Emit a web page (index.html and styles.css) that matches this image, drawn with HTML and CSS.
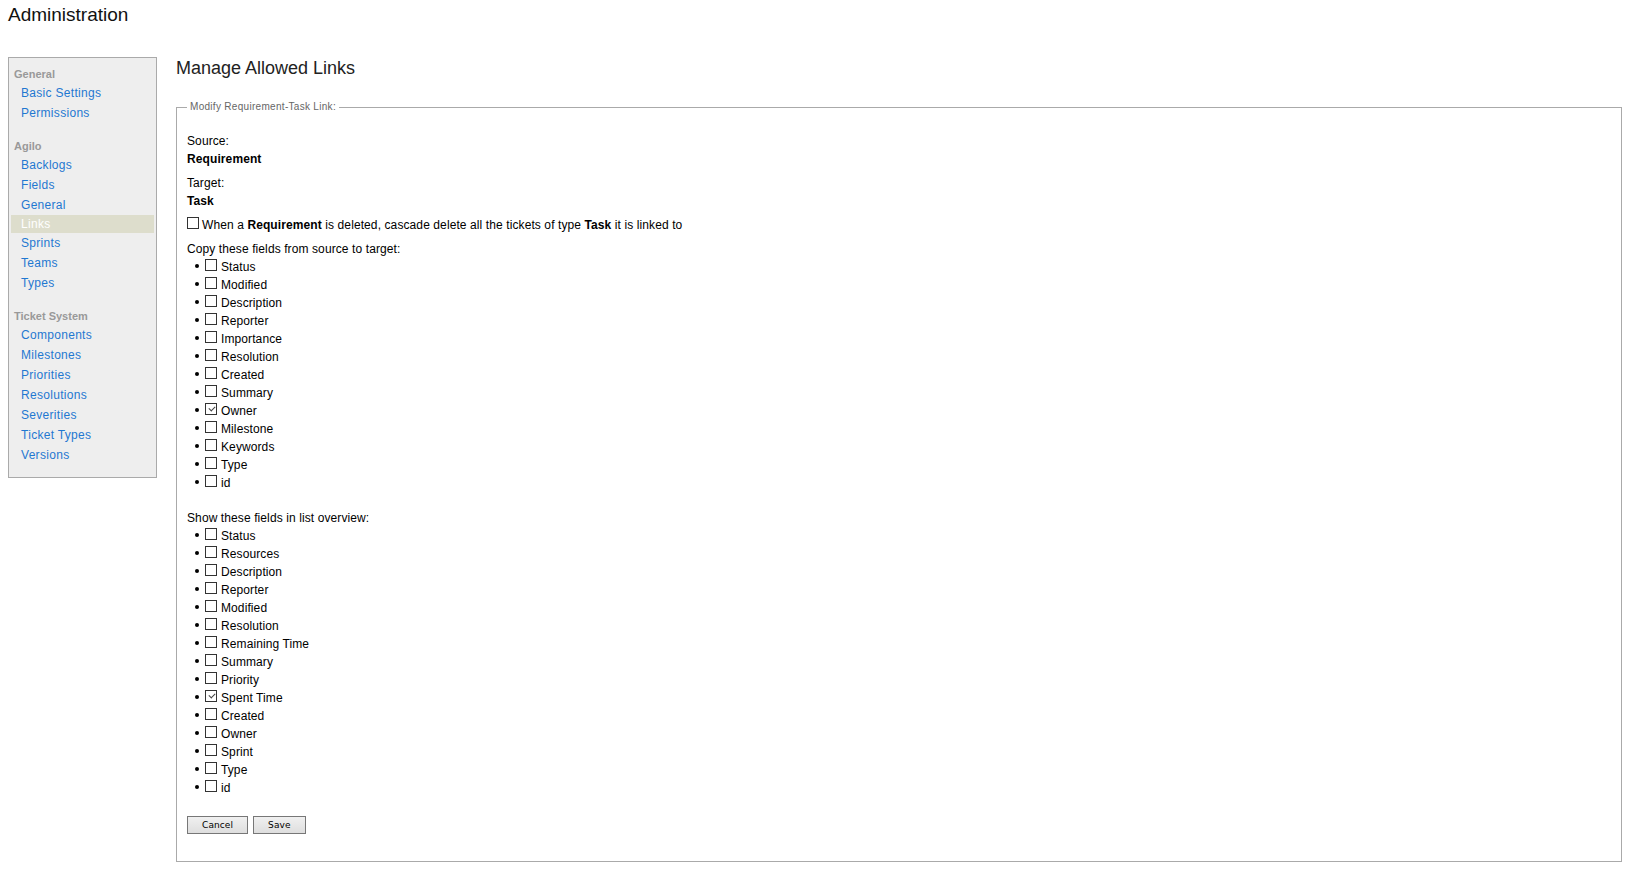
FILE: index.html
```html
<!DOCTYPE html>
<html lang="en">

<head>
    <meta charset="UTF-8">
    <title>Administration</title>
    <link rel="stylesheet" href="styles.css">
</head>

<body>
    <h1 class="page-title">Administration</h1>

    <div class="admin">
        <!-- Admin panel navigation -->
        <div class="tabs">
            <div class="group">
                <div class="group-title">General</div>
                <ul>
                    <li><a href="#">Basic Settings</a></li>
                    <li><a href="#">Permissions</a></li>
                </ul>
            </div>
            <div class="group">
                <div class="group-title">Agilo</div>
                <ul>
                    <li><a href="#">Backlogs</a></li>
                    <li><a href="#">Fields</a></li>
                    <li><a href="#">General</a></li>
                    <li class="active"><a href="#">Links</a></li>
                    <li><a href="#">Sprints</a></li>
                    <li><a href="#">Teams</a></li>
                    <li><a href="#">Types</a></li>
                </ul>
            </div>
            <div class="group">
                <div class="group-title">Ticket System</div>
                <ul>
                    <li><a href="#">Components</a></li>
                    <li><a href="#">Milestones</a></li>
                    <li><a href="#">Priorities</a></li>
                    <li><a href="#">Resolutions</a></li>
                    <li><a href="#">Severities</a></li>
                    <li><a href="#">Ticket Types</a></li>
                    <li><a href="#">Versions</a></li>
                </ul>
            </div>
        </div>

        <div class="tabcontent">
            <h2>Manage Allowed Links</h2>

            <form action="" name="modifylink">
                <fieldset>
                    <legend>Modify Requirement-Task Link:</legend>

                    <div class="field">
                        <div class="field-label">Source:</div>
                        <div class="field-value">Requirement</div>
                    </div>
                    <div class="field field-last">
                        <div class="field-label">Target:</div>
                        <div class="field-value">Task</div>
                    </div>

                    <div class="cascade">
                        <input type="checkbox" name="cascade_delete">When a <b>Requirement</b> is deleted, cascade delete all the tickets of type <b>Task</b> it is linked to
                    </div>

                    <p class="list-title">Copy these fields from source to target:</p>
                    <ul class="checklist">
                        <li><input type="checkbox" name="copy_status">Status</li>
                        <li><input type="checkbox" name="copy_changetime">Modified</li>
                        <li><input type="checkbox" name="copy_description">Description</li>
                        <li><input type="checkbox" name="copy_reporter">Reporter</li>
                        <li><input type="checkbox" name="copy_importance">Importance</li>
                        <li><input type="checkbox" name="copy_resolution">Resolution</li>
                        <li><input type="checkbox" name="copy_time">Created</li>
                        <li><input type="checkbox" name="copy_summary">Summary</li>
                        <li><input type="checkbox" name="copy_owner" checked>Owner</li>
                        <li><input type="checkbox" name="copy_milestone">Milestone</li>
                        <li><input type="checkbox" name="copy_keywords">Keywords</li>
                        <li><input type="checkbox" name="copy_type">Type</li>
                        <li><input type="checkbox" name="copy_id">id</li>
                    </ul>

                    <p class="list-title">Show these fields in list overview:</p>
                    <ul class="checklist">
                        <li><input type="checkbox" name="show_status">Status</li>
                        <li><input type="checkbox" name="show_resources">Resources</li>
                        <li><input type="checkbox" name="show_description">Description</li>
                        <li><input type="checkbox" name="show_reporter">Reporter</li>
                        <li><input type="checkbox" name="show_changetime">Modified</li>
                        <li><input type="checkbox" name="show_resolution">Resolution</li>
                        <li><input type="checkbox" name="show_remaining_time">Remaining Time</li>
                        <li><input type="checkbox" name="show_summary">Summary</li>
                        <li><input type="checkbox" name="show_priority">Priority</li>
                        <li><input type="checkbox" name="show_total_hours" checked>Spent Time</li>
                        <li><input type="checkbox" name="show_time">Created</li>
                        <li><input type="checkbox" name="show_owner">Owner</li>
                        <li><input type="checkbox" name="show_sprint">Sprint</li>
                        <li><input type="checkbox" name="show_type">Type</li>
                        <li><input type="checkbox" name="show_id">id</li>
                    </ul>

                    <div class="buttons">
                        <button type="button" class="btn">Cancel</button>
                        <button type="submit" class="btn">Save</button>
                    </div>
                </fieldset>
            </form>
        </div>
    </div>
</body>

</html>
```

FILE: styles.css
```css
* {
    box-sizing: border-box;
}

body {
    margin: 0;
    padding: 0 4px 0 8px;
    font-family: "Liberation Sans", Arial, sans-serif;
    font-size: 12px;
    letter-spacing: 0.1px;
    color: #000;
    background: #fff;
}

a {
    color: #1f78d1;
    text-decoration: none;
}

.page-title {
    margin: 4px 0 0;
    font-size: 19px;
    font-weight: normal;
    line-height: 22px;
    letter-spacing: 0;
    color: #111;
}

/* Two column admin layout */
.admin {
    display: flex;
    align-items: flex-start;
    margin-top: 30px;
}

/* Side navigation */
.tabs {
    width: 149px;
    flex-shrink: 0;
    margin-top: 1px;
    padding: 7px 0 12px;
    background: #eee;
    border: 1px solid #aaa;
}

.tabs .group + .group {
    margin-top: 14px;
}

.tabs .group-title {
    padding-left: 5px;
    font-size: 11px;
    font-weight: bold;
    line-height: 18px;
    letter-spacing: 0;
    color: #999;
}

.tabs ul {
    list-style: none;
    margin: 0 2px;
    padding: 0;
}

.tabs li a {
    display: block;
    padding-left: 10px;
    line-height: 20px;
    letter-spacing: 0.3px;
}

.tabs li.active a {
    line-height: 18px;
    background: #ddc;
    color: #fff;
}

/* Main panel */
.tabcontent {
    flex: 1;
    margin-left: 19px;
}

.tabcontent h2 {
    margin: 1px 0 22px;
    font-size: 18px;
    font-weight: normal;
    line-height: 22px;
    letter-spacing: 0;
    color: #222;
}

fieldset {
    margin: 0;
    padding: 19px 10px 27px;
    border: 1px solid #aaa;
}

legend {
    padding: 0 3px;
    font-size: 10px;
    line-height: 12px;
    letter-spacing: 0.3px;
    color: #666;
}

.field {
    margin-bottom: 6px;
    line-height: 18px;
}

.field-value {
    font-weight: bold;
}

.cascade {
    margin-bottom: 6px;
    line-height: 18px;
}

.list-title {
    margin: 0;
    line-height: 18px;
}

/* Checkbox lists */
.checklist {
    list-style: none;
    margin: 0 0 17px;
    padding: 0 0 0 8px;
}

.checklist + .list-title + .checklist {
    margin-bottom: 18px;
}

.checklist li {
    line-height: 18px;
}

.checklist li::before {
    content: "";
    display: inline-block;
    width: 4px;
    height: 4px;
    margin: 0 6px 3px 0;
    border-radius: 50%;
    background: #000;
    vertical-align: middle;
}

input[type="checkbox"] {
    -webkit-appearance: none;
    appearance: none;
    position: relative;
    display: inline-block;
    width: 12px;
    height: 12px;
    margin: 0 4px 0 0;
    border: 1px solid #333;
    background: #fff;
    vertical-align: baseline;
}

.cascade input[type="checkbox"] {
    margin-right: 3px;
}

input[type="checkbox"]:checked::after {
    content: "";
    position: absolute;
    left: 3px;
    top: 2px;
    width: 5px;
    height: 3px;
    border-left: 1px solid #444;
    border-bottom: 1px solid #444;
    transform: rotate(-45deg);
}

/* Form buttons */
.buttons {
    display: flex;
    gap: 5px;
    margin-top: 19px;
}

.btn {
    height: 18px;
    padding: 0 14px;
    border: 1px solid #777;
    background: linear-gradient(#f0f0f0, #dedede);
    font-family: "DejaVu Sans", sans-serif;
    font-size: 9px;
    letter-spacing: 0.1px;
    color: #000;
    cursor: pointer;
}
```
